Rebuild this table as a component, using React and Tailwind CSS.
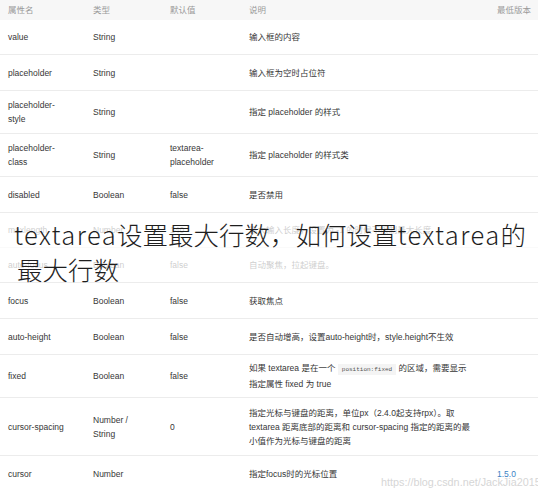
import React from 'react';

const rows = [
    { name: 'value', type: 'String', def: '', desc: '输入框的内容', h: 'h-[35px]' },
    { name: 'placeholder', type: 'String', def: '', desc: '输入框为空时占位符', h: 'h-[36px]' },
    { name: ['placeholder-', 'style'], type: 'String', def: '', desc: '指定 placeholder 的样式', h: 'h-[43px]' },
    { name: ['placeholder-', 'class'], type: 'String', def: ['textarea-', 'placeholder'], desc: '指定 placeholder 的样式类', h: 'h-[43px]' },
    { name: 'disabled', type: 'Boolean', def: 'false', desc: '是否禁用', h: 'h-[36px]' },
    { name: 'maxlength', type: 'Number', def: '140', desc: '最大输入长度，设置为 -1 的时候不限制最大长度', h: 'h-[35px]' },
    { name: 'auto-focus', type: 'Boolean', def: 'false', desc: '自动聚焦，拉起键盘。', h: 'h-[35px]' },
    { name: 'focus', type: 'Boolean', def: 'false', desc: '获取焦点', h: 'h-[36px]' },
    { name: 'auto-height', type: 'Boolean', def: 'false', desc: '是否自动增高，设置auto-height时，style.height不生效', h: 'h-[36px]' },
    {
        name: 'fixed',
        type: 'Boolean',
        def: 'false',
        desc: (
            <>
                如果 textarea 是在一个{' '}
                <code className="bg-[#f4f4f4] px-[4px] py-[2px] font-['Liberation_Mono',monospace] text-[6px] text-[#555]">position:fixed</code>{' '}
                的区域，需要显示
                <br />
                指定属性 fixed 为 true
            </>
        ),
        h: 'h-[43px]',
    },
    {
        name: 'cursor-spacing',
        type: ['Number /', 'String'],
        def: '0',
        desc: (
            <>
                指定光标与键盘的距离，单位px（2.4.0起支持rpx）。取
                <br />
                textarea 距离底部的距离和 cursor-spacing 指定的距离的最
                <br />
                小值作为光标与键盘的距离
            </>
        ),
        h: 'h-[58px]',
    },
    { name: 'cursor', type: 'Number', def: '', desc: '指定focus时的光标位置', ver: '1.5.0', h: 'h-[36px]' },
];

const Lines = ({ v }) =>
    Array.isArray(v) ? (
        <>
            {v.map((s, i) => (
                <div key={i}>{s}</div>
            ))}
        </>
    ) : (
        v
    );

export default function App() {
    return (
        <div className="relative w-[538px] h-[490px] overflow-hidden bg-white font-['Liberation_Sans','Noto_Sans_CJK_SC',sans-serif] text-[8.5px] leading-[14px] text-[#363636]">
            <div className="flex h-[20px] items-center bg-[#f7f7f7] text-[#9a9a9a]">
                <div className="w-[93px] pl-[8px]">属性名</div>
                <div className="w-[77px]">类型</div>
                <div className="w-[79px]">默认值</div>
                <div className="w-[248px]">说明</div>
                <div className="flex-1">最低版本</div>
            </div>
            {rows.map((r, i) => (
                <div key={i} className={`flex items-center border-b border-[#ececec] ${r.h}`}>
                    <div className="w-[93px] pl-[8px]">
                        <Lines v={r.name} />
                    </div>
                    <div className="w-[77px]">
                        <Lines v={r.type} />
                    </div>
                    <div className="w-[79px]">
                        <Lines v={r.def} />
                    </div>
                    <div className="w-[248px] whitespace-nowrap">{r.desc}</div>
                    <div className="flex-1 text-[#3b7fc4]">{r.ver}</div>
                </div>
            ))}

            {/* title overlay */}
            <div className="absolute left-0 right-0 top-[214px] h-[68px] bg-white/75" />
            <div className="absolute left-[14px] top-[216px] whitespace-nowrap font-['Noto_Sans_CJK_SC',sans-serif] text-[25.5px] font-light leading-[35px] text-[#1e1e1e]">
                <div>
                    <span className="tracking-[1.4px]">textarea</span>设置最大行数，如何设置<span className="tracking-[1.4px]">textarea</span>的
                </div>
                <div className="pl-[3px]">最大行数</div>
            </div>

            <div className="absolute left-[381px] bottom-[1px] whitespace-nowrap font-['Liberation_Sans',sans-serif] text-[10.8px] leading-[14px] text-[#d6d6d6]">
                https://blog.csdn.net/JackJia2015
            </div>
        </div>
    );
}
